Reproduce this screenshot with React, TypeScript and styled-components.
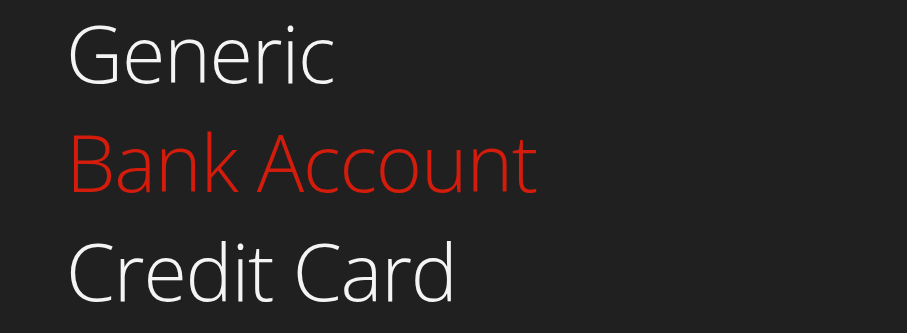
import React from 'react'
import styled, { createGlobalStyle } from 'styled-components'

const GlobalStyle = createGlobalStyle`
  html, body {
    margin: 0;
    padding: 0;
    background: #202020;
  }
  body {
    width: 907px;
    height: 333px;
    overflow: hidden;
  }
`

const items = [
  { label: 'Generic', active: false },
  { label: 'Bank Account', active: true },
  { label: 'Credit Card', active: false },
]

const App = () => {
  return (
    <>
      <GlobalStyle />
      <Menu>
        {items.map(item => (
          <MenuItem key={item.label} $active={item.active}>
            {item.label}
          </MenuItem>
        ))}
      </Menu>
    </>
  )
}

const Menu = styled.ul`
  list-style: none;
  margin: 0;
  padding: 3px 0 0 66px;
  display: flex;
  flex-direction: column;
  gap: 9px;
  height: 333px;
  box-sizing: border-box;
  background: #202020;
`

const MenuItem = styled.li<{ $active: boolean }>`
  font-family: "Open Sans", "Noto Sans", sans-serif;
  font-weight: 300;
  font-size: 79px;
  line-height: 100px;
  letter-spacing: -0.015em;
  color: ${p => (p.$active ? '#d41c0c' : '#f4f4f4')};
  white-space: nowrap;
`

export default App
